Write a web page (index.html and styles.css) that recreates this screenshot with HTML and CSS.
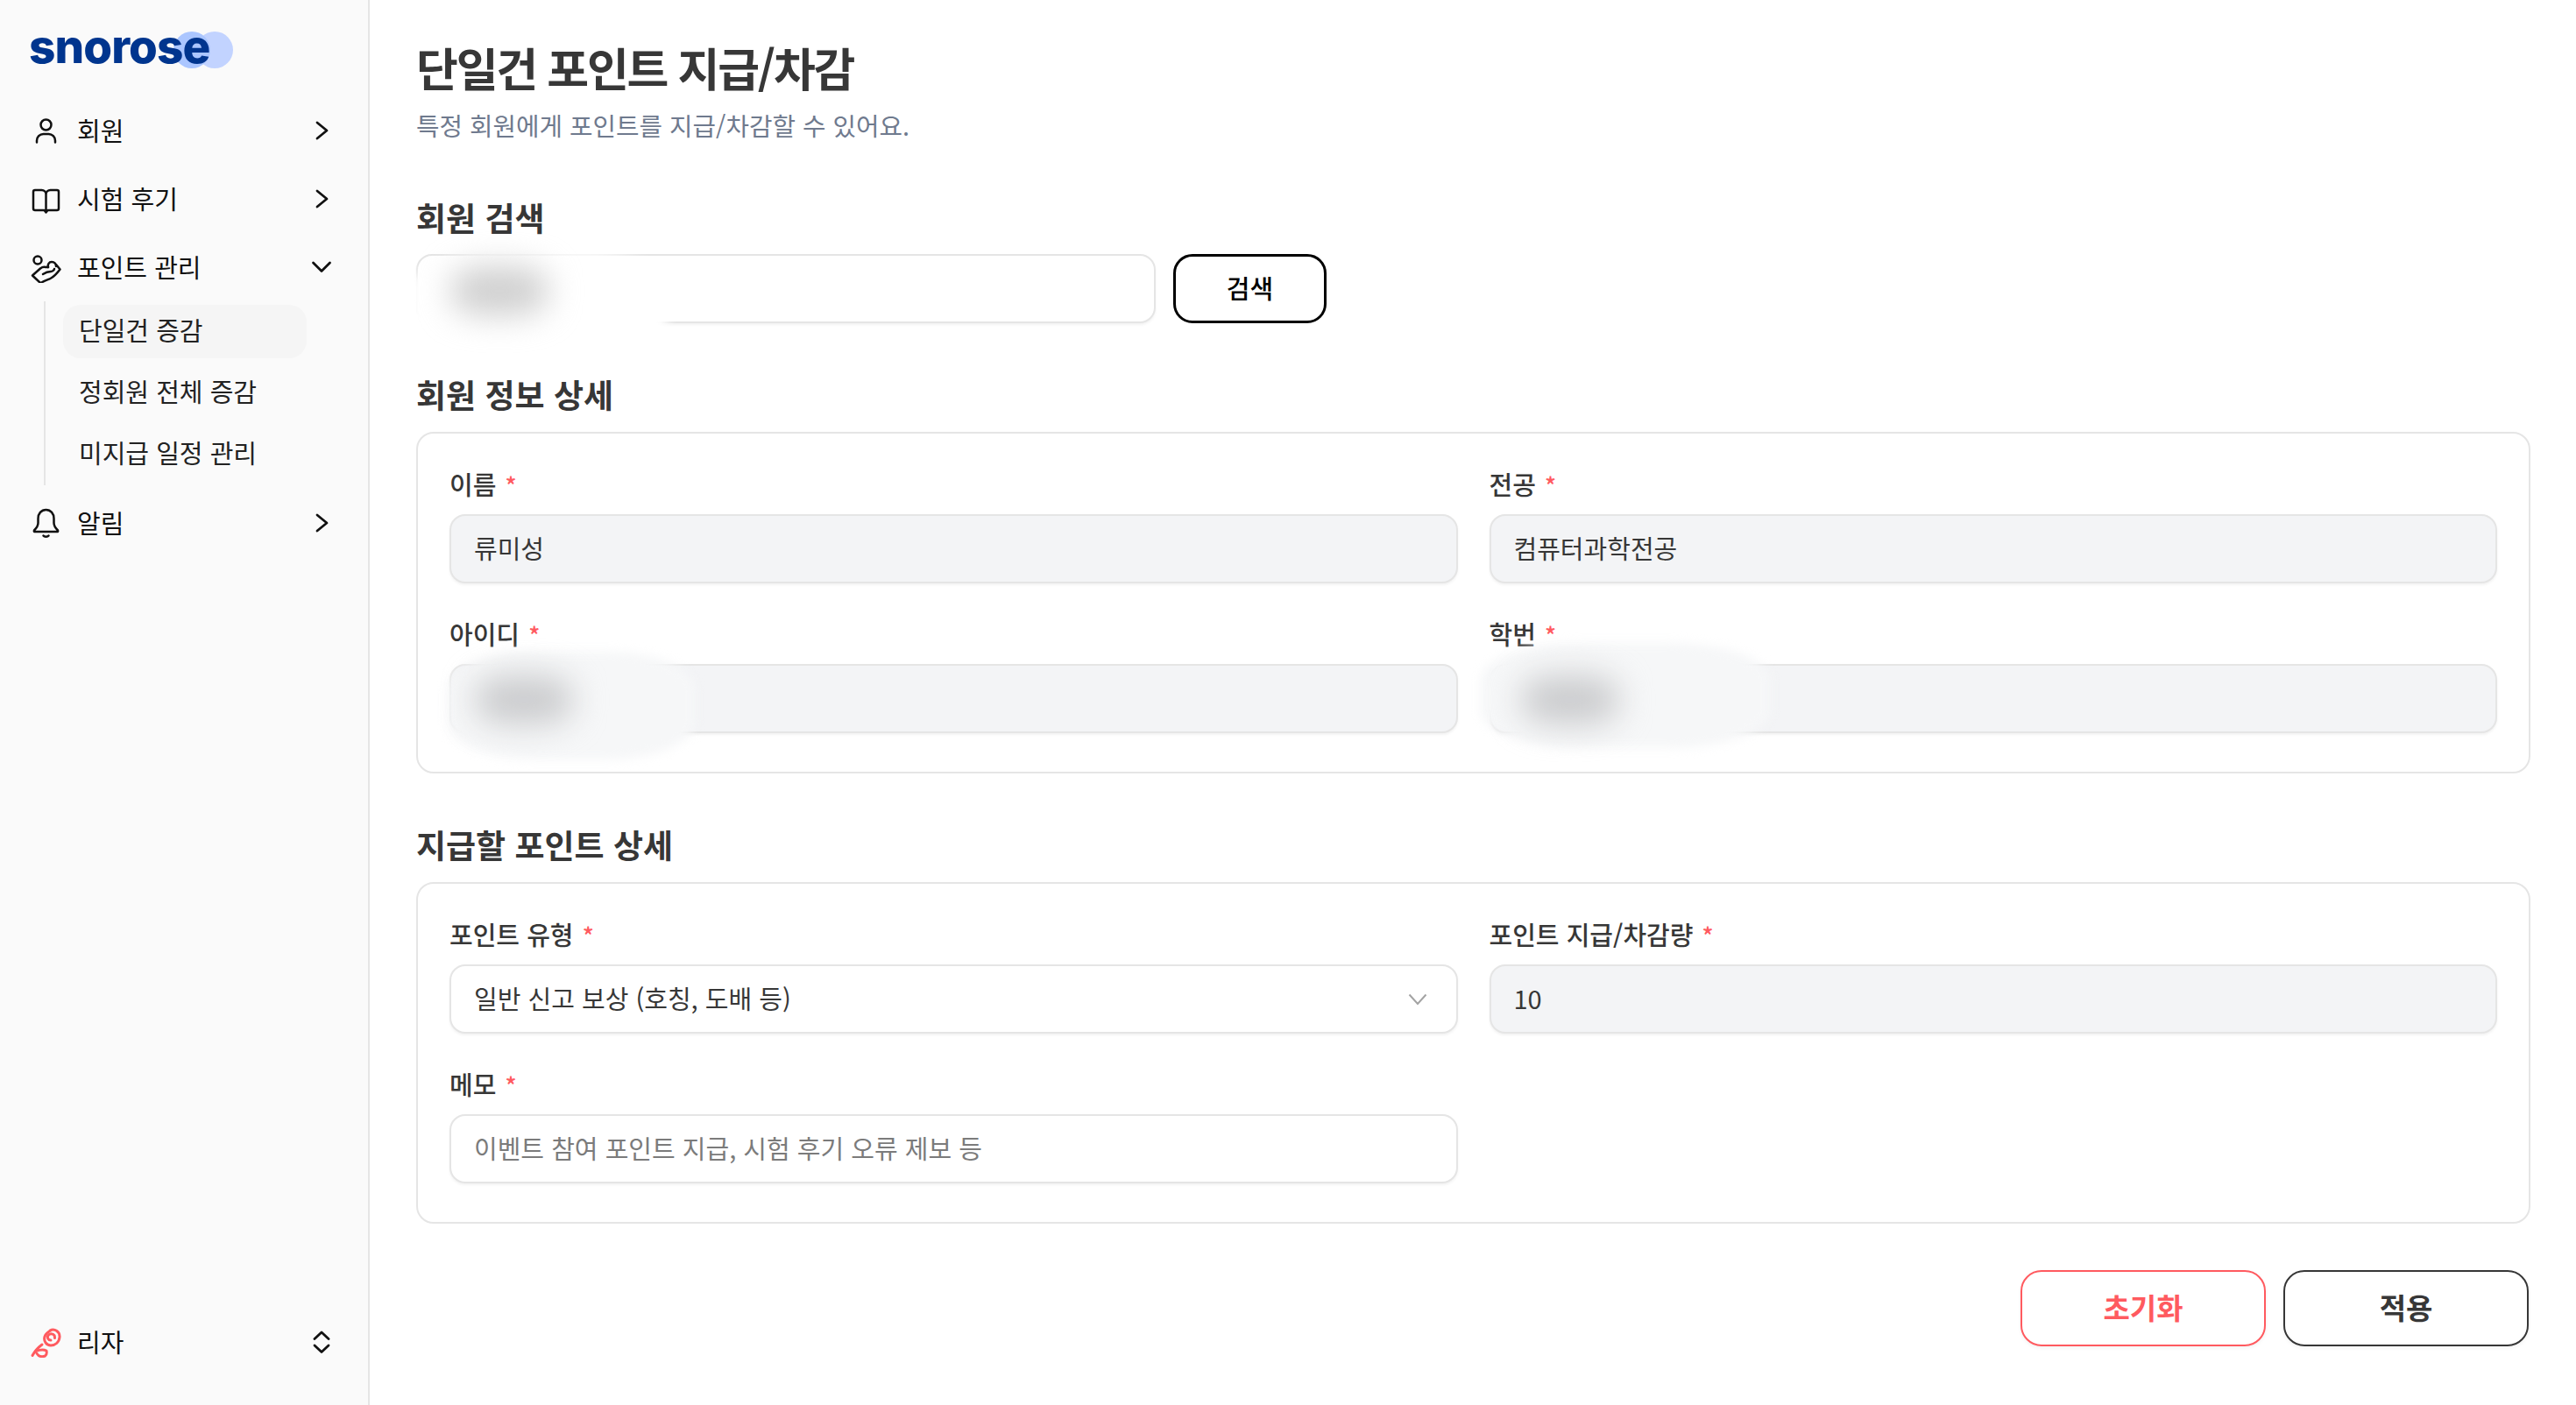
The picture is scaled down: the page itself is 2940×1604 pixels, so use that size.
FILE: index.html
```html
<!DOCTYPE html>
<html lang="ko">
<head>
<meta charset="utf-8">
<title>단일건 포인트 지급/차감</title>
<link rel="stylesheet" href="styles.css">
</head>
<body>
<div class="app">
  <aside class="sidebar">
    <div class="side-top">
      <div class="logo">
        <span class="logo-dot logo-dot-a"></span>
        <span class="logo-dot logo-dot-b"></span>
        <span class="logo-text">snorose</span>
      </div>
      <nav>
        <div class="nav-row">
          <svg class="icon" viewBox="0 0 36 36"><circle cx="18.5" cy="11.5" r="6"/><path d="M8 31.5v-2a7.5 7.5 0 0 1 7.5-7.5h6a7.5 7.5 0 0 1 7.5 7.5v2"/></svg>
          <span class="nav-label">회원</span>
          <svg class="chev" viewBox="0 0 32 32"><path d="M11 7l11 9-11 9"/></svg>
        </div>
        <div class="nav-row">
          <svg class="icon" viewBox="0 0 36 36"><path d="M18.500 13a5 5 0 0 0-5-5H6a2 2 0 0 0-2 2v19a2 2 0 0 0 2 2h10.500l2 2.500 2-2.500H31a2 2 0 0 0 2-2V10a2 2 0 0 0-2-2h-7.500a5 5 0 0 0-5 5v18"/></svg>
          <span class="nav-label">시험 후기</span>
          <svg class="chev" viewBox="0 0 32 32"><path d="M11 7l11 9-11 9"/></svg>
        </div>
        <div class="nav-row">
          <svg class="icon" viewBox="0 0 36 36"><circle cx="9" cy="10" r="4.500"/><path d="M12 36l-9-8.500 9-8c2-1.500 4-2 6-1.500h3"/><path d="M21 18c-1-3 1-6 4-6 3 0 5 2 5 5"/><path d="M30 15l4.500 5.500c-3 4-8 9-11 10.500-3 1.500-6 2-11 5"/><path d="M15 26c3-2 7-3 9-3 2 0 4-2 4-3"/></svg>
          <span class="nav-label">포인트 관리</span>
          <svg class="chev" viewBox="0 0 32 32"><path d="M6.500 11l9.500 9.500L25.500 11"/></svg>
        </div>
        <div class="sub-list">
          <a class="sub-item sub-active">단일건 증감</a>
          <a class="sub-item">정회원 전체 증감</a>
          <a class="sub-item">미지급 일정 관리</a>
        </div>
        <div class="nav-row nav-row-after">
          <svg class="icon" viewBox="0 0 36 36"><path d="M18.500 3c-5.500 0-9 4.500-9 10v5c0 4-2.500 6.500-4.500 8.500-.5 1 0 1.500 1 1.500h25c1 0 1.500-.5 1-1.500-2-2-4.500-4.500-4.500-8.500v-5c0-5.500-3.500-10-9-10z"/><path d="M15.500 32.500c1 1.500 5 1.500 6 0"/></svg>
          <span class="nav-label">알림</span>
          <svg class="chev" viewBox="0 0 32 32"><path d="M11 7l11 9-11 9"/></svg>
        </div>
      </nav>
    </div>
    <div class="nav-row side-user">
      <svg class="icon icon-rose" viewBox="0 0 36 36"><path d="M23 5c5-3 11.500 1 11 7.500-.5 6-5 9.500-10 9.500-5 0-8.500-5-7-10 1-3 3-5 6-6.500"/><path d="M24 16c-3 0-4.500-3-3-5.500 1.500-2.500 5.500-2.500 7 0 .5 1 .5 2 .5 3"/><path d="M14 21C10 24 6 28 3 33.500"/><path d="M7 28.500c4-1.500 9-2 12-.5.500 2.500 0 5-1.500 6-2.500 1-6 .5-7.500-.5-1.500-1-2.500-3-3-5z"/></svg>
      <span class="nav-label">리자</span>
      <svg class="chev" viewBox="0 0 32 32"><path d="M8 12.500l8-7.500 8 7.500"/><path d="M8 20l8 7.500 8-7.500"/></svg>
    </div>
  </aside>

  <main class="main">
    <h1 class="title">단일건 포인트 지급/차감</h1>
    <p class="subtitle">특정 회원에게 포인트를 지급/차감할 수 있어요.</p>

    <h2 class="section-title section-first">회원 검색</h2>
    <div class="search-row">
      <div class="search-box">
        <input class="field-input" type="text" aria-label="회원 검색">
        <span class="redact redact-search"></span>
        <span class="smudge smudge-search"></span>
      </div>
      <button class="btn-search" type="button">검색</button>
    </div>

    <h2 class="section-title">회원 정보 상세</h2>
    <section class="card">
      <div class="field">
        <label class="field-label">이름 <em>*</em></label>
        <input class="field-input is-disabled" type="text" value="류미성" readonly>
      </div>
      <div class="field">
        <label class="field-label">전공 <em>*</em></label>
        <input class="field-input is-disabled" type="text" value="컴퓨터과학전공" readonly>
      </div>
      <div class="field">
        <label class="field-label">아이디 <em>*</em></label>
        <div class="input-wrap">
          <input class="field-input is-disabled" type="text" readonly>
          <span class="redact redact-id"></span>
          <span class="smudge smudge-id"></span>
        </div>
      </div>
      <div class="field">
        <label class="field-label">학번 <em>*</em></label>
        <div class="input-wrap">
          <input class="field-input is-disabled" type="text" readonly>
          <span class="redact redact-num"></span>
          <span class="smudge smudge-num"></span>
        </div>
      </div>
    </section>

    <h2 class="section-title">지급할 포인트 상세</h2>
    <section class="card">
      <div class="field">
        <label class="field-label">포인트 유형 <em>*</em></label>
        <div class="input-wrap">
          <select class="field-input field-select">
            <option>일반 신고 보상 (호칭, 도배 등)</option>
          </select>
          <svg class="select-chev" viewBox="0 0 22 14"><path d="M1.500 1.500L11 12l9.500-10.500"/></svg>
        </div>
      </div>
      <div class="field">
        <label class="field-label">포인트 지급/차감량 <em>*</em></label>
        <input class="field-input is-disabled" type="text" value="10" readonly>
      </div>
      <div class="field">
        <label class="field-label">메모 <em>*</em></label>
        <input class="field-input" type="text" placeholder="이벤트 참여 포인트 지급, 시험 후기 오류 제보 등">
      </div>
    </section>

    <div class="actions">
      <button class="btn-action btn-reset" type="button">초기화</button>
      <button class="btn-action btn-apply" type="button">적용</button>
    </div>
  </main>
</div>
</body>
</html>
```
FILE: styles.css
```css
* { box-sizing: border-box; }
html, body { margin: 0; padding: 0; height: 100%; background: #fff; }
body {
  font-family: "Noto Sans CJK KR", "Inter", "Noto Sans", sans-serif;
  color: #373737;
  overflow: hidden;
}
.app { display: flex; height: 1604px; }

.sidebar {
  width: 422px;
  flex: none;
  background: #fafafa;
  border-right: 2px solid #e5e5e5;
  display: flex;
  flex-direction: column;
  justify-content: space-between;
  padding-bottom: 33px;
}
.logo { position: relative; height: 110px; }
.logo-text {
  position: absolute;
  left: 33px;
  top: 18px;
  z-index: 2;
  font-family: "Inter", sans-serif;
  font-weight: 800;
  font-size: 53px;
  line-height: 70px;
  letter-spacing: -0.9px;
  color: #00358e;
}
.logo-dot { position: absolute; top: 36px; width: 42px; height: 42px; border-radius: 50%; }
.logo-dot-a { left: 198px; background: #abc6ff; z-index: 1; }
.logo-dot-b { left: 224px; background: #c2d3ff; }

.nav-row {
  display: flex;
  align-items: center;
  height: 78px;
  padding: 0 37px 0 34px;
  font-size: 29px;
  color: #111;
}
.nav-row-after { margin-top: 4px; }
.nav-label { margin-left: 18px; flex: 1; padding-bottom: 3px; }
.icon {
  width: 36px;
  height: 36px;
  flex: none;
  fill: none;
  stroke: #111;
  stroke-width: 2.5;
  stroke-linecap: round;
  stroke-linejoin: round;
}
.icon-rose { stroke: #ff5a5f; stroke-width: 3; }
.chev {
  width: 32px;
  height: 32px;
  flex: none;
  fill: none;
  stroke: #111;
  stroke-width: 2.800;
  stroke-linecap: round;
  stroke-linejoin: round;
}
.sub-list {
  margin-left: 50px;
  width: 300px;
  border-left: 2px solid #e5e5e5;
  padding: 4px 0 5px 20px;
  display: flex;
  flex-direction: column;
  gap: 9px;
}
.sub-item {
  display: flex;
  align-items: center;
  height: 61px;
  padding: 0 0 6px 18px;
  border-radius: 20px;
  font-size: 29px;
  color: #222;
}
.sub-active { background: #f5f5f5; }

.main { flex: 1; min-width: 0; padding: 43px 52px 0 53px; }
.title {
  margin: 0;
  font-size: 52px;
  line-height: 68px;
  font-weight: 700;
  color: #373737;
  letter-spacing: -2.200px;
}
.subtitle {
  margin: 12px 0 0;
  font-size: 28.800px;
  line-height: 40px;
  font-weight: 400;
  color: #6f7a8e;
}
.section-title {
  margin: 59px 0 21px;
  font-size: 37px;
  line-height: 44px;
  font-weight: 700;
  color: #373737;
}
.section-first { margin-top: 63px; margin-bottom: 20px; }

.search-row { display: flex; gap: 20px; }
.search-box { position: relative; width: 844px; }
.input-wrap { position: relative; }

.field-input {
  display: block;
  width: 100%;
  height: 79px;
  padding: 0 26px 3px;
  border: 2px solid #e5e5e5;
  border-radius: 18px;
  background: #fff;
  box-shadow: 0 2px 3px rgba(0, 0, 0, 0.05);
  font-family: inherit;
  font-size: 29px;
  color: #373737;
  outline: none;
}
.field-input::placeholder { color: #7b7b7b; opacity: 1; }
.is-disabled { background: #f3f4f6; }
.field-select { appearance: none; -webkit-appearance: none; }
.select-chev {
  position: absolute;
  right: 35px;
  top: 33px;
  width: 22px;
  height: 14px;
  fill: none;
  stroke: #a3a3a3;
  stroke-width: 2;
}

.btn-search {
  width: 175px;
  height: 79px;
  padding-bottom: 4px;
  border: 3px solid #000;
  border-radius: 22px;
  background: #fff;
  font-family: inherit;
  font-size: 29px;
  font-weight: 500;
  color: #000;
}

.card {
  display: grid;
  grid-template-columns: 1fr 1fr;
  column-gap: 36px;
  row-gap: 39px;
  padding: 39px 36px 44px;
  border: 2px solid #e5e5e5;
  border-radius: 20px;
  background: #fff;
}
.field { display: flex; flex-direction: column; gap: 13px; min-width: 0; }
.field-label {
  height: 40px;
  font-size: 29px;
  line-height: 36px;
  font-weight: 500;
  color: #373737;
  overflow: visible;
}
.field-label em {
  font-style: normal;
  font-size: 27px;
  line-height: 1;
  color: #ff5a5f;
  margin-left: 2px;
}

.redact, .smudge {
  position: absolute;
  display: block;
  border-radius: 35%;
  pointer-events: none;
}
.redact { filter: blur(6px); }
.smudge { filter: blur(18px); background: #cbccce; }
.redact-search { left: -6px; top: -2px; width: 295px; height: 112px; background: #fff; }
.smudge-search { left: 40px; top: 14px; width: 110px; height: 56px; background: #d0d0d0; }
.redact-id { left: -3px; top: -14px; width: 283px; height: 123px; background: #f6f7f8; }
.smudge-id { left: 30px; top: 13px; width: 110px; height: 56px; }
.redact-num { left: -10px; top: -24px; width: 330px; height: 120px; background: #f6f7f8; }
.smudge-num { left: 37px; top: 13px; width: 110px; height: 56px; }

.actions { display: flex; justify-content: flex-end; gap: 20px; margin-top: 53px; padding-right: 2px; }
.btn-action {
  width: 280px;
  height: 87px;
  padding-bottom: 4px;
  border-radius: 24px;
  border: 2px solid;
  background: #fff;
  font-family: inherit;
  font-size: 33px;
  font-weight: 700;
  box-shadow: 0 2px 4px rgba(0, 0, 0, 0.05);
}
.btn-reset { border-color: #ff5a5f; color: #ff5a5f; }
.btn-apply { border-color: #373737; color: #373737; }
```
